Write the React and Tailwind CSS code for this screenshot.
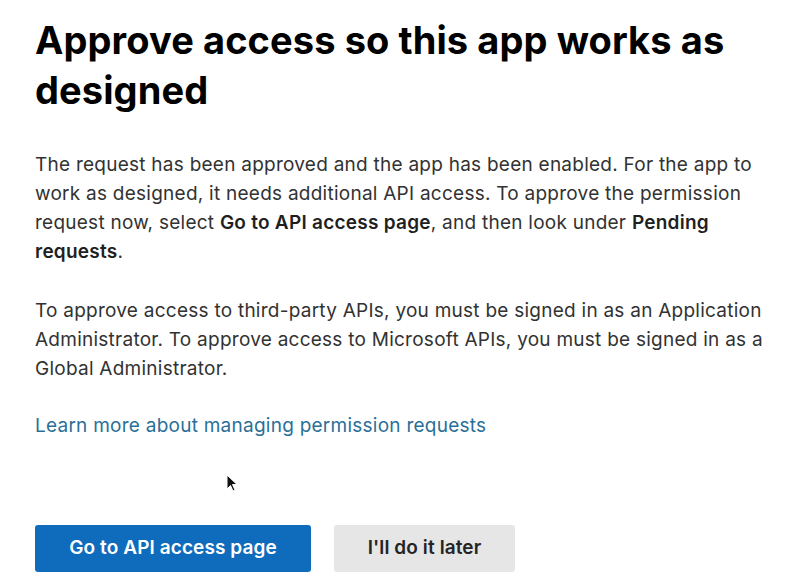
export default function App() {
  return (
    <div className="relative min-h-[584px] bg-white pl-[35px] pr-[18px] pt-[15px] font-['Inter','Liberation_Sans',sans-serif] text-[#242424]">
      <h1 className="text-[38px] font-bold leading-[50px] text-black tracking-[0.1px]">
        Approve access so this app works as
        <br />
        designed
      </h1>

      <p className="mt-[35px] text-[19px] leading-[29px] tracking-[0.25px] text-[#323232]">
        The request has been approved and the app has been enabled. For the app to
        work as designed, it needs additional API access. To approve the permission
        request now, select <b className="font-semibold text-[#1f1f1f]">Go to API access page</b>, and
        then look under <b className="font-semibold text-[#1f1f1f]">Pending requests</b>.
      </p>

      <p className="mt-[30px] text-[19px] leading-[29px] tracking-[0.25px] text-[#323232]">
        To approve access to third-party APIs, you must be signed in as an Application
        Administrator. To approve access to Microsoft APIs, you must be signed in as a
        Global Administrator.
      </p>

      <a href="#" className="mt-[28px] block text-[19px] leading-[29px] tracking-[0.25px] text-[#2a6f97]">
        Learn more about managing permission requests
      </a>

      <div className="mt-[85px] flex gap-[23px]">
        <button className="h-[47px] w-[276px] rounded-[3px] bg-[#0f6cbd] text-[19px] font-semibold tracking-[0.1px] text-white">
          Go to API access page
        </button>
        <button className="h-[47px] w-[181px] rounded-[3px] bg-[#e6e6e6] text-[19px] font-semibold tracking-[0.1px] text-[#242424]">
          I'll do it later
        </button>
      </div>

      {/* mouse pointer */}
      <svg className="absolute left-[226px] top-[474px]" width="12" height="18" viewBox="0 0 12 18">
        <path d="M1 1 L1 15 L4.5 11.5 L7 17 L9 16 L6.5 10.5 L11 10.5 Z" fill="#111" stroke="#fff" strokeWidth="1" />
      </svg>
    </div>
  );
}
